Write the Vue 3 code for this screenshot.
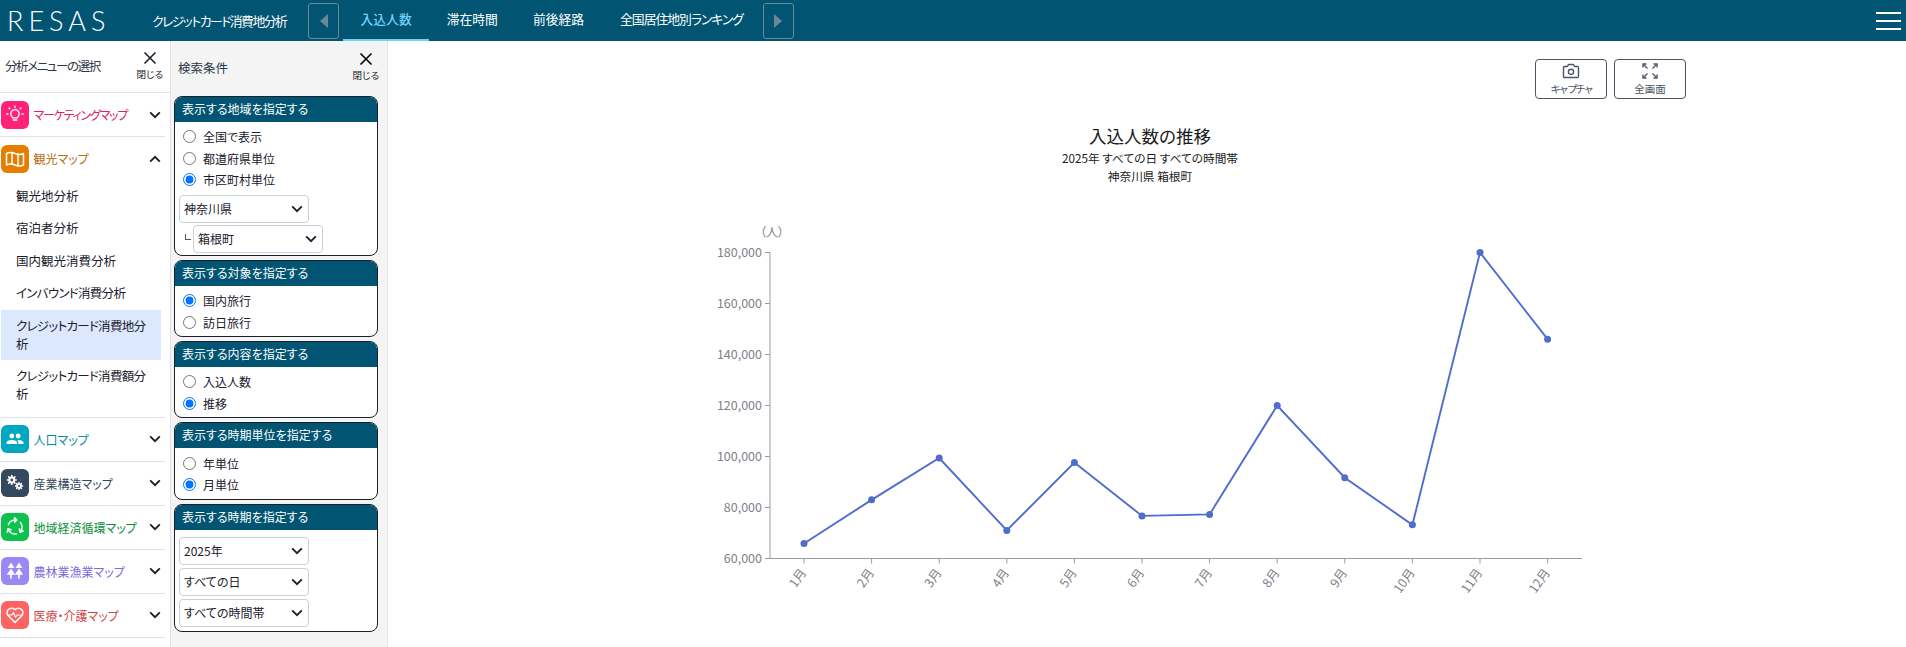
<script setup>
import { ref } from "vue";

const tabs = ["入込人数", "滞在時間", "前後経路", "全国居住地別ランキング"];

const menus = [
  { name: "マーケティングマップ", color: "#ff2277", text: "#e0206a", icon: "bulb", tight: true },
  { name: "観光マップ", color: "#e57d00", text: "#b86c10", icon: "map", open: true },
  { name: "人口マップ", color: "#00a7c1", text: "#0a8ca3", icon: "people" },
  { name: "産業構造マップ", color: "#34495e", text: "#34495e", icon: "gears" },
  { name: "地域経済循環マップ", color: "#0cc24c", text: "#0a8f3c", icon: "cycle" },
  { name: "農林業漁業マップ", color: "#9b87f5", text: "#7d6bd8", icon: "trees" },
  { name: "医療・介護マップ", color: "#ff6464", text: "#d04848", icon: "heart" },
];

const subMenus = [
  { name: "観光地分析" },
  { name: "宿泊者分析" },
  { name: "国内観光消費分析" },
  { name: "インバウンド消費分析", tight: true },
  { name: "クレジットカード消費地分析", active: true, tight: true },
  { name: "クレジットカード消費額分析", tight: true },
];

const area = ref("city");
const target = ref("domestic");
const content = ref("trend");
const unit = ref("month");
const pref = ref("神奈川県");
const city = ref("箱根町");
const year = ref("2025年");
const day = ref("すべての日");
const time = ref("すべての時間帯");

// chart
const top = 7.5;
const bottom = 313.5;
const axisX = 6;
const values = [65900, 83000, 99400, 71000, 97600, 76700, 77300, 120000, 91700, 73200, 180000, 146000];
const yTicks = [180000, 160000, 140000, 120000, 100000, 80000, 60000];

const yOf = (v) => bottom - ((v - 60000) / 120000) * (bottom - top);
const xOf = (i) => 40 + i * 67.6;
const points = values.map((v, i) => ({ x: xOf(i), y: yOf(v), label: i + 1 + "月" }));
const linePath = points.map((p) => p.x + "," + p.y).join(" ");
</script>

<template>
  <div class="page">
    <header class="topbar">
      <div class="logo">RESAS</div>
      <div class="page-name">クレジットカード消費地分析</div>
      <button class="arrow-btn">
        <svg width="8" height="14" viewBox="0 0 8 14"><path d="M8 0V14L0 7Z" fill="#6d8794" /></svg>
      </button>
      <nav class="tabs">
        <a v-for="(tab, i) in tabs" :key="tab" class="tab" :class="{ current: i === 0, long: i === 3 }">{{ tab }}</a>
      </nav>
      <button class="arrow-btn">
        <svg width="8" height="14" viewBox="0 0 8 14"><path d="M0 0V14L8 7Z" fill="#6d8794" /></svg>
      </button>
      <div class="burger"><span></span><span></span><span></span></div>
    </header>

    <div class="body">
      <aside class="side">
        <div class="side-head">
          <span class="side-title">分析メニューの選択</span>
          <button class="close-btn">
            <svg width="14" height="14" viewBox="0 0 14 14"><path d="M1.5 1.5L12.5 12.5M12.5 1.5L1.5 12.5" stroke="#1a202c" stroke-width="1.6" /></svg>
            <span>閉じる</span>
          </button>
        </div>
        <div v-for="menu in menus" :key="menu.name" class="menu">
          <div class="menu-row">
            <span class="menu-icon" :style="{ backgroundColor: menu.color }">
              <svg width="20" height="20" viewBox="0 0 20 20" fill="none" stroke="#fff" stroke-width="1.3" stroke-linecap="round" stroke-linejoin="round">
                <g v-if="menu.icon === 'bulb'">
                  <path d="M7.4 12.8c-.2-1-.7-1.5-1.2-2.2a4.2 4.2 0 1 1 7.6 0c-.5.7-1 1.2-1.2 2.2z" />
                  <path d="M8.2 15h3.6M10 1.2v1.2M3 9H1.8M18.2 9H17M4.9 3.9l-.9-.9M15.1 3.9l.9-.9" />
                </g>
                <g v-else-if="menu.icon === 'map'">
                  <path d="M1.5 4.5q4.2-2 8.5 0t8.5 0v11.5q-4.2 2-8.5 0t-8.5 0z" stroke-width="1.5" />
                  <path d="M7 3.5v12M13 4.8v12" stroke-width="1.5" />
                </g>
                <g v-else-if="menu.icon === 'people'" fill="#fff" stroke="none">
                  <circle cx="6.8" cy="7" r="2.4" />
                  <circle cx="13.2" cy="7" r="2.4" />
                  <path d="M1.5 15v-1.4c0-1.7 3.3-2.6 5.3-2.6s5.3.9 5.3 2.6V15zM13.3 15v-1.4c0-1-.5-1.8-1.2-2.4.5-.1.8-.2 1.1-.2 2 0 5.3.9 5.3 2.6V15z" />
                </g>
                <g v-else-if="menu.icon === 'gears'" stroke="#fff">
                  <circle cx="6.8" cy="7" r="2.4" stroke-width="2" />
                  <path d="M6.8 2.6v1.6M6.8 9.8v1.6M2.4 7H4M9.6 7h1.6M3.7 3.9l1 1M8.9 9.1l1 1M9.9 3.9l-1 1M4.7 9.1l-1 1" stroke-width="1.6" />
                  <circle cx="14" cy="13" r="1.9" stroke-width="1.7" />
                  <path d="M14 9.4v1.3M14 15.3v1.3M10.4 13h1.3M16.3 13h1.3M11.5 10.5l.9.9M15.6 14.6l.9.9M16.5 10.5l-.9.9M12.4 14.6l-.9.9" stroke-width="1.4" />
                </g>
                <g v-else-if="menu.icon === 'cycle'" stroke-width="1.6">
                  <g v-for="angle in [0, 120, 240]" :key="angle" :transform="'rotate(' + angle + ' 10 10)'">
                    <path d="M3.42 7.6A7 7 0 0 1 11.2 3.1" />
                    <path d="M9.5 .9L11.9 3l-2.3 2.2" />
                  </g>
                </g>
                <g v-else-if="menu.icon === 'trees'" fill="#fff" stroke="none">
                  <path d="M6 1.5l3.4 5.6H2.6zM6 7.4l4.2 6.4H1.8zM5.2 13.8h1.6v4H5.2z" />
                  <path d="M14 1.5l3.4 5.6h-6.8zM14 7.4l4.2 6.4H9.8zM13.2 13.8h1.6v4h-1.6z" />
                </g>
                <g v-else stroke-width="1.5">
                  <path d="M10 17.5l-6.6-6.6a4.5 4.5 0 0 1 0-6.4 4.5 4.5 0 0 1 6.6.2 4.5 4.5 0 0 1 6.6-.2 4.5 4.5 0 0 1 0 6.4z" />
                  <path d="M2.5 10h4.4l1.4-2.4 2.2 4.6 1.6-2.2h5.4" stroke-width="1.2" />
                </g>
              </svg>
            </span>
            <span class="menu-name" :class="{ tight: menu.tight }" :style="{ color: menu.text }">{{ menu.name }}</span>
            <svg class="chev" :class="{ up: menu.open }" width="12" height="8" viewBox="0 0 12 8"><path d="M1.2 1.4L6 6.2l4.8-4.8" fill="none" stroke="#1a202c" stroke-width="1.9" /></svg>
          </div>
          <ul v-if="menu.open" class="sub">
            <li v-for="sub in subMenus" :key="sub.name" :class="{ active: sub.active, tight: sub.tight }">{{ sub.name }}</li>
          </ul>
        </div>
      </aside>

      <section class="filters">
        <div class="filters-head">
          <span>検索条件</span>
          <button class="close-btn">
            <svg width="14" height="14" viewBox="0 0 14 14"><path d="M1.5 1.5L12.5 12.5M12.5 1.5L1.5 12.5" stroke="#000" stroke-width="1.6" /></svg>
            <span>閉じる</span>
          </button>
        </div>

        <div class="card">
          <h3>表示する地域を指定する</h3>
          <div class="card-body region">
            <label class="radio"><input v-model="area" type="radio" name="area" value="all" />全国で表示</label>
            <label class="radio"><input v-model="area" type="radio" name="area" value="pref" />都道府県単位</label>
            <label class="radio"><input v-model="area" type="radio" name="area" value="city" />市区町村単位</label>
            <div class="select first">
              <select v-model="pref"><option>神奈川県</option></select>
              <svg width="12" height="8" viewBox="0 0 12 8"><path d="M1.2 1.4L6 6.2l4.8-4.8" fill="none" stroke="#1a202c" stroke-width="1.9" /></svg>
            </div>
            <div class="nested">
              <span class="corner"></span>
              <div class="select">
                <select v-model="city"><option>箱根町</option></select>
                <svg width="12" height="8" viewBox="0 0 12 8"><path d="M1.2 1.4L6 6.2l4.8-4.8" fill="none" stroke="#1a202c" stroke-width="1.9" /></svg>
              </div>
            </div>
          </div>
        </div>

        <div class="card">
          <h3>表示する対象を指定する</h3>
          <div class="card-body">
            <label class="radio"><input v-model="target" type="radio" name="target" value="domestic" />国内旅行</label>
            <label class="radio"><input v-model="target" type="radio" name="target" value="inbound" />訪日旅行</label>
          </div>
        </div>

        <div class="card">
          <h3>表示する内容を指定する</h3>
          <div class="card-body">
            <label class="radio"><input v-model="content" type="radio" name="content" value="count" />入込人数</label>
            <label class="radio"><input v-model="content" type="radio" name="content" value="trend" />推移</label>
          </div>
        </div>

        <div class="card">
          <h3>表示する時期単位を指定する</h3>
          <div class="card-body">
            <label class="radio"><input v-model="unit" type="radio" name="unit" value="year" />年単位</label>
            <label class="radio"><input v-model="unit" type="radio" name="unit" value="month" />月単位</label>
          </div>
        </div>

        <div class="card">
          <h3>表示する時期を指定する</h3>
          <div class="card-body periods">
            <div class="select">
              <select v-model="year"><option>2025年</option></select>
              <svg width="12" height="8" viewBox="0 0 12 8"><path d="M1.2 1.4L6 6.2l4.8-4.8" fill="none" stroke="#1a202c" stroke-width="1.9" /></svg>
            </div>
            <div class="select">
              <select v-model="day"><option>すべての日</option></select>
              <svg width="12" height="8" viewBox="0 0 12 8"><path d="M1.2 1.4L6 6.2l4.8-4.8" fill="none" stroke="#1a202c" stroke-width="1.9" /></svg>
            </div>
            <div class="select">
              <select v-model="time"><option>すべての時間帯</option></select>
              <svg width="12" height="8" viewBox="0 0 12 8"><path d="M1.2 1.4L6 6.2l4.8-4.8" fill="none" stroke="#1a202c" stroke-width="1.9" /></svg>
            </div>
          </div>
        </div>
      </section>

      <main class="content">
        <div class="tools">
          <button class="tool">
            <svg width="18" height="16" viewBox="0 0 18 16" fill="none" stroke="#4b5563" stroke-width="1.4" stroke-linejoin="round">
              <path d="M2.5 3.5h3l1-2h5l1 2h3a1 1 0 0 1 1 1v9a1 1 0 0 1-1 1h-13a1 1 0 0 1-1-1v-9a1 1 0 0 1 1-1z" />
              <circle cx="9" cy="8.8" r="2.6" />
            </svg>
            <span class="tight">キャプチャ</span>
          </button>
          <button class="tool">
            <svg width="16" height="16" viewBox="0 0 16 16" fill="none" stroke="#4b5563" stroke-width="1.3">
              <path d="M1.5 1.5l4 4M14.5 1.5l-4 4M1.5 14.5l4-4M14.5 14.5l-4-4" />
              <path d="M1 4.5V1h3.5M15 4.5V1h-3.5M1 11.5V15h3.5M15 11.5V15h-3.5" stroke-width="1.4" />
            </svg>
            <span>全画面</span>
          </button>
        </div>

        <div class="chart-title">
          <h2>入込人数の推移</h2>
          <p>2025年 すべての日 すべての時間帯</p>
          <p>神奈川県 箱根町</p>
        </div>

        <svg class="chart" width="900" height="380" viewBox="-76 -20 900 380">
          <text :x="axisX + 2" y="-8" class="unit" text-anchor="middle">（人）</text>
          <line :x1="axisX" :x2="axisX" :y1="top" :y2="bottom" class="axis" />
          <line :x1="axisX" x2="818" :y1="bottom" :y2="bottom" class="axis" />
          <g v-for="tick in yTicks" :key="tick">
            <line :x1="axisX - 5" :x2="axisX" :y1="yOf(tick)" :y2="yOf(tick)" class="axis" />
            <text :x="axisX - 8" :y="yOf(tick) + 4" class="tick" text-anchor="end">{{ tick.toLocaleString("en-US") }}</text>
          </g>
          <g v-for="p in points" :key="p.label">
            <line :x1="p.x" :x2="p.x" :y1="bottom" :y2="bottom + 5" class="axis" />
            <text class="tick" text-anchor="end" :transform="'translate(' + (p.x + 3) + ',' + (bottom + 14) + ') rotate(-55)'">{{ p.label }}</text>
          </g>
          <polyline :points="linePath" class="line" />
          <circle v-for="p in points" :key="'c' + p.label" :cx="p.x" :cy="p.y" r="3.5" class="dot" />
        </svg>
      </main>
    </div>
  </div>
</template>

<style>
html,
body {
  margin: 0;
  background: #fff;
}
</style>

<style scoped>
.page {
  width: 1906px;
  height: 647px;
  overflow: hidden;
  display: flex;
  flex-direction: column;
  font-family: "Noto Sans CJK JP", "Noto Sans", sans-serif;
  font-feature-settings: "palt";
  color: #1a202c;
}

.topbar {
  height: 41px;
  flex: none;
  background: #015472;
  display: flex;
  align-items: center;
  color: #fff;
  font-size: 12.8px;
}

.logo {
  width: 152px;
  padding-left: 7px;
  padding-bottom: 1px;
  box-sizing: border-box;
  font-family: Lato, sans-serif;
  font-weight: 300;
  font-size: 27px;
  letter-spacing: 5px;
  line-height: 1;
}

.page-name {
  width: 156px;
  white-space: nowrap;
  letter-spacing: -1.5px;
}

.arrow-btn {
  width: 31px;
  height: 36px;
  padding: 0;
  background: transparent;
  border: 1px solid #6d8794;
  border-radius: 3px;
  display: flex;
  align-items: center;
  justify-content: center;
}

.tabs {
  display: flex;
  height: 41px;
  margin-left: 4px;
}

.tab {
  padding: 0 17.5px;
  height: 41px;
  line-height: 38px;
  box-sizing: border-box;
  white-space: nowrap;
}

.tab.long {
  letter-spacing: -1px;
  padding: 0 20px 0 18.5px;
}

.tab.current {
  color: #71d2f6;
  font-weight: 500;
  border-bottom: 2px solid #71d2f6;
}

.burger {
  margin-left: auto;
  margin-right: 5px;
  width: 25px;
  display: flex;
  flex-direction: column;
  gap: 6px;
}

.burger span {
  height: 2px;
  background: #fff;
}

.body {
  flex: 1;
  display: flex;
  min-height: 0;
}

.side {
  width: 171px;
  flex: none;
  box-sizing: border-box;
  border-right: 1px solid #e2e2e2;
}

.side-head {
  height: 52px;
  box-sizing: border-box;
  border-bottom: 1px solid #e2e2e2;
  display: flex;
  align-items: center;
  justify-content: space-between;
  padding: 0 7px 2px 5px;
  font-size: 12.5px;
  color: #2d3748;
}

.side-title {
  letter-spacing: -1.4px;
}

.close-btn {
  padding: 0;
  background: none;
  border: none;
  display: flex;
  flex-direction: column;
  align-items: center;
  gap: 2px;
  font-family: inherit;
  font-size: 9.5px;
  letter-spacing: -0.7px;
  line-height: 14px;
  color: #1a202c;
}

.menu {
  width: 165px;
  border-bottom: 1px solid #e2e2e2;
}

.menu-row {
  height: 43px;
  display: flex;
  align-items: center;
  padding-left: 1px;
}

.menu-icon {
  width: 28px;
  height: 28px;
  border-radius: 6px;
  flex: none;
  display: flex;
  align-items: center;
  justify-content: center;
}

.menu-name {
  flex: 1;
  padding-left: 4.5px;
  font-size: 12px;
  font-weight: 400;
  white-space: nowrap;
}

.menu-name.tight {
  letter-spacing: -1.2px;
}

.chev {
  margin-right: 4px;
}

.chev.up {
  transform: rotate(180deg);
}

.sub {
  list-style: none;
  margin: 0;
  padding: 0 0 6.5px;
  font-size: 12.5px;
  line-height: 18px;
}

.sub li {
  width: 160px;
  margin-left: 1px;
  box-sizing: border-box;
  padding: 7px 13px 7.4px 15px;
  color: #1a202c;
}

.sub li.tight {
  letter-spacing: -0.7px;
}

.sub li.active {
  background: #dbe8fd;
}

.filters {
  width: 217px;
  flex: none;
  box-sizing: border-box;
  background: #f4f4f4;
  border-right: 1px solid #e6e6e6;
  padding: 0 9px 0 3px;
}

.filters-head {
  height: 55px;
  box-sizing: border-box;
  display: flex;
  align-items: center;
  justify-content: space-between;
  padding: 0 0 3px 4px;
  font-size: 12.5px;
  color: #2d3748;
}

.filters-head .close-btn {
  margin-right: -1px;
}

.card {
  margin-bottom: 4px;
  background: #fff;
  border: 1px solid #1a202c;
  border-radius: 8px;
  overflow: hidden;
}

.card h3 {
  margin: -1px -1px 0;
  height: 26px;
  padding-left: 8px;
  background: #015472;
  color: #fff;
  font-size: 12px;
  font-weight: 400;
  line-height: 26px;
}

.card-body {
  padding: 4px 4px 3.3px;
}

.card-body.region {
  padding-bottom: 2.3px;
}

.radio {
  height: 21.5px;
  display: flex;
  align-items: center;
  font-size: 12px;
  color: #1a202c;
}

.radio input {
  width: 13px;
  height: 13px;
  margin: 0 7px 0 4px;
}

.select {
  position: relative;
  width: 130px;
  height: 28px;
}

.select.first {
  margin-top: 4px;
  margin-bottom: 2px;
}

.select select {
  width: 100%;
  height: 100%;
  appearance: none;
  background: #fff;
  border: 1px solid #cbd0d8;
  border-radius: 4px;
  padding: 0 0 0 4px;
  font-family: inherit;
  font-feature-settings: inherit;
  font-size: 12px;
  color: #1a202c;
}

.select svg {
  position: absolute;
  right: 6px;
  top: 10px;
  pointer-events: none;
}

.nested {
  display: flex;
  align-items: center;
}

.corner {
  width: 6px;
  height: 6px;
  margin: 0 2px 4px 6px;
  border-left: 1px solid #555;
  border-bottom: 1px solid #555;
  box-sizing: border-box;
}

.periods {
  padding: 7px 4px 4px;
  display: flex;
  flex-direction: column;
  gap: 3px;
}

.content {
  flex: 1;
  position: relative;
  display: flex;
  flex-direction: column;
  align-items: flex-start;
}

.tools {
  display: flex;
  gap: 7px;
  margin: 18px 0 0 1147px;
}

.tool {
  width: 72px;
  height: 40px;
  padding: 3px 0 0;
  background: #fff;
  border: 1px solid #4b5563;
  border-radius: 4px;
  display: flex;
  flex-direction: column;
  align-items: center;
  gap: 4px;
  font-family: inherit;
  font-size: 10.5px;
  line-height: 12px;
  color: #4b5563;
}

.tool .tight {
  letter-spacing: -2.2px;
}

.chart-title {
  width: 1524px;
  margin-top: 24px;
  text-align: center;
  color: #1a1a1a;
}

.chart-title h2 {
  margin: 0;
  font-size: 17.5px;
  font-weight: 400;
  line-height: 26px;
}

.chart-title p {
  margin: 0;
  font-size: 11.7px;
  line-height: 18px;
}

.chart {
  margin: 40px 0 0 300px;
  overflow: visible;
}

.axis {
  stroke: #9a9aa5;
  stroke-width: 1;
}

.tick {
  font-size: 12.5px;
  fill: #808088;
}

.unit {
  font-size: 12px;
  fill: #808088;
}

.line {
  fill: none;
  stroke: #4f6dcc;
  stroke-width: 1.9;
}

.dot {
  fill: #4f6dcc;
}
</style>
